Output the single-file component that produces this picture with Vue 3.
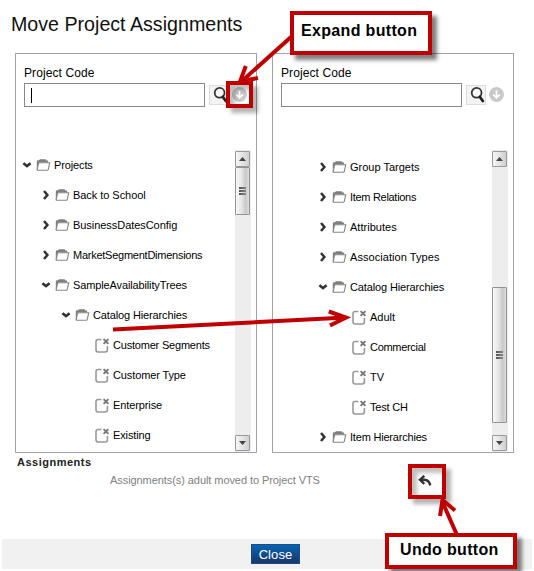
<script setup>
const panels = [
  {
    key: 'source',
    focused: true,
    rows: [
      { text: 'Projects', level: 0, open: true, ls: -0.13 },
      { text: 'Back to School', level: 1, ls: -0.05 },
      { text: 'BusinessDatesConfig', level: 1, ls: -0.05 },
      { text: 'MarketSegmentDimensions', level: 1, ls: -0.25 },
      { text: 'SampleAvailabilityTrees', level: 1, open: true, ls: -0.13 },
      { text: 'Catalog Hierarchies', level: 2, open: true, ls: -0.13 },
      { text: 'Customer Segments', level: 3, ls: -0.2 },
      { text: 'Customer Type', level: 3, ls: -0.12 },
      { text: 'Enterprise', level: 3, ls: -0.1 },
      { text: 'Existing', level: 3, ls: -0.12 }
    ]
  },
  {
    key: 'target',
    focused: false,
    rows: [
      { text: 'Group Targets', level: 2, ls: 0 },
      { text: 'Item Relations', level: 2, ls: -0.3 },
      { text: 'Attributes', level: 2, ls: 0.03 },
      { text: 'Association Types', level: 2, ls: 0.06 },
      { text: 'Catalog Hierarchies', level: 2, open: true, ls: -0.13 },
      { text: 'Adult', level: 3, ls: 0 },
      { text: 'Commercial', level: 3, ls: -0.3 },
      { text: 'TV', level: 3, ls: 0 },
      { text: 'Test CH', level: 3, ls: -0.2 },
      { text: 'Item Hierarchies', level: 2, ls: -0.2 }
    ]
  }
]
</script>

<template>
  <div class="page">
    <h1>Move Project Assignments</h1>

    <div class="panels">
      <section v-for="p in panels" :key="p.key" class="panel" :class="p.key">
        <div class="label">Project Code</div>
        <div class="search">
          <div class="field"><span v-if="p.focused" class="caret"></span></div>
          <div class="find">
            <svg width="18" height="18" viewBox="0 0 18 18">
              <circle cx="9.6" cy="6.8" r="4.9" fill="#fafafa" stroke="#333" stroke-width="1.8" />
              <path d="M12.8 10.8L15.8 15" stroke="#222" stroke-width="2.8" stroke-linecap="round" />
            </svg>
          </div>
          <svg class="expand" width="15" height="15" viewBox="0 0 15 15">
            <circle cx="7.5" cy="7.5" r="7.4" fill="#c9c9c9" />
            <path d="M7.5 3.5V10.5M4.2 7.6L7.5 10.8L10.8 7.6" fill="none" stroke="#fff" stroke-width="1.8" />
          </svg>
        </div>

        <div class="body">
          <div class="tree">
            <div v-for="r in p.rows" :key="r.text" class="row" :class="'level' + r.level">
              <template v-if="r.level < 3">
                <svg class="chev" width="12" height="12" viewBox="0 0 12 12">
                  <path v-if="r.open" d="M2.4 4.2L6 7.1L9.6 4.2" fill="none" stroke="#333" stroke-width="2.6" />
                  <path v-else d="M4 2L7.4 6L4 10" fill="none" stroke="#333" stroke-width="2.5" />
                </svg>
                <svg class="folder" width="15" height="12" viewBox="0 0 15 12">
                  <path d="M.8 10.6V2.4Q.8 1.2 2 1.2H3L4 .3H9.6L10.5 1.4H11.5Q12.2 1.4 12.2 2.4V3.4H4Q3.2 3.4 3 4.2L1.6 11Z" fill="#808080" />
                  <path d="M3.6 3.7H13.7L12.3 10.3Q12.1 11.2 11.2 11.2H1.3Q1 11.2 1.2 10.5L2.4 4.8Q2.6 3.7 3.6 3.7Z" fill="#fff" stroke="#858585" stroke-width="1.1" />
                </svg>
              </template>
              <svg v-else class="leaf" width="15" height="15" viewBox="0 0 15 15">
                <path d="M6.4 1.5H3.2Q1 1.5 1 3.7V11.8Q1 14 3.2 14H10.2Q12.4 14 12.4 11.8V8" fill="none" stroke="#999" stroke-width="1.6" />
                <path d="M8.6 1.1L13.4 5.9M13.4 1.1L8.6 5.9" stroke="#777" stroke-width="1.9" />
              </svg>
              <span :style="{ letterSpacing: r.ls + 'px' }">{{ r.text }}</span>
            </div>
          </div>

          <div class="scroll">
            <div class="sbtn">
              <svg width="7" height="4" viewBox="0 0 7 4"><path d="M0 4L3.5 0L7 4Z" fill="#444" /></svg>
            </div>
            <div class="track">
              <div class="thumb"><i></i><i></i><i></i></div>
            </div>
            <div class="sbtn">
              <svg width="7" height="4" viewBox="0 0 7 4"><path d="M0 0L3.5 4L7 0Z" fill="#444" /></svg>
            </div>
          </div>
        </div>
      </section>
    </div>

    <div class="assign">Assignments</div>
    <div class="status">
      <span class="msg">Assignments(s) adult moved to Project VTS</span>
      <svg class="undo" width="14" height="12" viewBox="0 0 14 12">
        <path d="M6.3 .8L2 4.8L6.3 8.8" fill="none" stroke="#333" stroke-width="2.4" />
        <path d="M2.5 4.8H6.5Q11 5.2 12.3 10.4" fill="none" stroke="#333" stroke-width="2.4" />
      </svg>
    </div>

    <footer><button>Close</button></footer>

    <div class="mark mark-expand"></div>
    <div class="mark mark-undo"></div>
    <svg class="arrows" width="534" height="571" viewBox="0 0 534 571" fill="none" stroke="#c00000" stroke-width="4">
      <path d="M291 37L242 81" />
      <path d="M245.8 66L240 81.5L258 78" />
      <path d="M113 329.5L346 317.5" />
      <path d="M328.8 311.5L346 317.5L330 325.5" />
      <path d="M457 535L442 501" />
      <path d="M440 516L442.5 500L455 510.5" />
    </svg>
    <div class="callout callout-expand">Expand button</div>
    <div class="callout callout-undo">Undo button</div>
  </div>
</template>

<style>
body {
  margin: 0;
  background: #fff;
}
</style>

<style scoped>
.page {
  position: relative;
  width: 534px;
  height: 571px;
  overflow: hidden;
  box-sizing: border-box;
  background: #fff;
  font-family: "Liberation Sans", Arial, sans-serif;
  color: #000;
  display: flex;
  flex-direction: column;
}
svg {
  display: block;
  flex: none;
}
h1 {
  margin: 0 0 0 11px;
  padding-top: 11px;
  height: 42px;
  font-size: 21px;
  line-height: 26px;
  font-weight: 400;
  transform: scaleX(0.935);
  transform-origin: left;
  white-space: nowrap;
  color: #111;
}
.panels {
  display: flex;
  gap: 15px;
  padding-left: 15px;
}
.panel {
  width: 242px;
  height: 400px;
  box-sizing: border-box;
  border: 1px solid #a2a2ae;
  display: flex;
  flex-direction: column;
}
.label {
  padding: 12px 0 0 8px;
  font-size: 12px;
  line-height: 14px;
  letter-spacing: 0.1px;
}
.search {
  display: flex;
  padding: 3px 0 0 8px;
  height: 25px;
}
.field {
  width: 181px;
  height: 24px;
  box-sizing: border-box;
  border: 1px solid #888;
  display: flex;
  align-items: center;
  padding-left: 6px;
}
.caret {
  width: 1px;
  height: 15px;
  background: #000;
}
.find {
  width: 20px;
  height: 20px;
  box-sizing: border-box;
  border: 1px solid #dcdcdc;
  background: #f3f3f3;
  margin: 2px 0 0 4px;
}
.expand {
  margin: 4px 0 0 3px;
}
.body {
  display: flex;
  justify-content: space-between;
  padding: 42px 5px 0 0;
}
.tree {
  display: flex;
  flex-direction: column;
}
.target .tree {
  padding-top: 2px;
}
.row {
  height: 30px;
  display: flex;
  align-items: center;
  font-size: 11px;
  white-space: nowrap;
}
.level0 { padding-left: 5px; }
.level1 { padding-left: 24px; }
.level2 { padding-left: 44px; }
.level3 { padding-left: 79px; }
.folder { margin: 0 3px 0 3px; }
.leaf { margin-right: 3px; }
.row span {
  line-height: 13px;
}
.scroll {
  width: 16px;
  height: 302px;
  display: flex;
  flex-direction: column;
  background: #ededed;
  box-sizing: border-box;
  padding-top: 1px;
  padding-bottom: 1px;
}
.sbtn {
  width: 15px;
  height: 16px;
  box-sizing: border-box;
  border: 1px solid #999;
  border-radius: 1px;
  background: linear-gradient(90deg, #f6f6f6, #e6e6e6 45%, #cfcfcf);
  display: flex;
  align-items: center;
  justify-content: center;
}
.track {
  flex: 1;
}
.thumb {
  width: 15px;
  height: 48px;
  box-sizing: border-box;
  border: 1px solid #949494;
  border-radius: 1px;
  background: linear-gradient(90deg, #f8f8f8, #e4e4e4 45%, #c9c9c9 75%, #dcdcdc);
  display: flex;
  flex-direction: column;
  align-items: center;
  justify-content: center;
  gap: 1px;
}
.target .thumb {
  height: 136px;
  margin-top: 120px;
}
.thumb i {
  width: 7px;
  height: 2px;
  background: linear-gradient(90deg, #555, #888);
}
.assign {
  padding: 3px 0 0 17px;
  font-size: 11px;
  line-height: 13px;
  font-weight: 700;
  letter-spacing: 0.5px;
  color: #222;
}
.status {
  display: flex;
  padding: 5px 0 0 110px;
  height: 65px;
  color: #808080;
  font-size: 11px;
  line-height: 13px;
}
.msg {
  width: 308px;
  letter-spacing: -0.07px;
}
.undo {
  margin-top: 1px;
}
footer {
  margin: 0 2px;
  height: 30px;
  background: #f1f1f1;
  display: flex;
  align-items: center;
  padding-left: 249px;
}
button {
  width: 49px;
  height: 20px;
  padding: 0;
  border: 1px solid #174f8d;
  background: linear-gradient(#0765b4, #1b3665);
  color: #fff;
  font-family: inherit;
  font-size: 13px;
  line-height: 17px;
  letter-spacing: 0.1px;
}
.mark,
.callout {
  position: absolute;
  box-sizing: border-box;
  border: 4px solid #c00000;
}
.mark {
  box-shadow: 5px 5px 4px rgba(0, 0, 0, 0.3), inset 5px 5px 4px rgba(0, 0, 0, 0.25);
}
.mark-expand {
  left: 226px;
  top: 81px;
  width: 27px;
  height: 27px;
}
.mark-undo {
  left: 408px;
  top: 464px;
  width: 38px;
  height: 35px;
}
.arrows {
  position: absolute;
  left: 0;
  top: 0;
}
.callout {
  background: #fff;
  box-shadow: 5px 5px 4px rgba(0, 0, 0, 0.5);
  font-size: 16px;
  font-weight: 700;
  white-space: nowrap;
}
.callout-expand {
  left: 290px;
  top: 11px;
  width: 142px;
  height: 44px;
  padding-left: 7px;
  line-height: 32px;
  letter-spacing: 0.33px;
}
.callout-undo {
  left: 385px;
  top: 533px;
  width: 132px;
  height: 36px;
  padding-left: 11px;
  line-height: 25px;
  letter-spacing: 0.33px;
}
</style>
